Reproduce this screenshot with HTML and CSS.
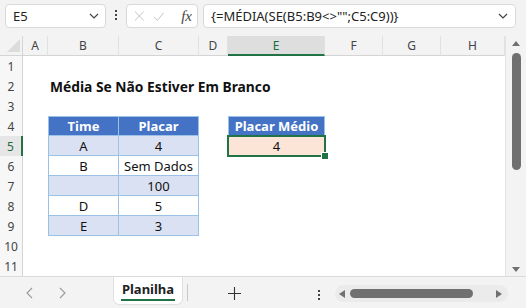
FILE: index.html
```html
<!DOCTYPE html>
<html lang="pt-br">
<head>
  <meta charset="UTF-8">
  <title>Média Se Não Estiver Em Branco</title>
  <link rel="stylesheet" href="styles.css">
</head>
<body>
  <div class="app">
    <!-- Barra de fórmulas -->
    <div class="toolbar">
      <div class="name-box">
        <span>E5</span>
        <svg class="chev" width="10" height="6" viewBox="0 0 10 6"><path d="M1 1 L5 5 L9 1" fill="none" stroke="#444" stroke-width="1.2"/></svg>
      </div>
      <div class="vdots"><i></i><i></i><i></i></div>
      <div class="fx-box">
        <svg width="12" height="12" viewBox="0 0 12 12"><path d="M1 1 L11 11 M11 1 L1 11" stroke="#bdbdbd" stroke-width="1"/></svg>
        <svg width="13" height="11" viewBox="0 0 13 11"><path d="M1 6 L5 10 L12 1" fill="none" stroke="#bdbdbd" stroke-width="1"/></svg>
        <span class="fx">fx</span>
      </div>
      <div class="formula-box">
        <span>{=MÉDIA(SE(B5:B9&lt;&gt;"";C5:C9))}</span>
        <svg class="chev" width="10" height="6" viewBox="0 0 10 6"><path d="M1 1 L5 5 L9 1" fill="none" stroke="#444" stroke-width="1.2"/></svg>
      </div>
    </div>

    <div class="main">
      <div class="grid">
        <!-- cabeçalhos de coluna -->
        <div class="corner"><span class="tri"></span></div>
        <div class="ch">A</div><div class="ch">B</div><div class="ch">C</div><div class="ch">D</div>
        <div class="ch sel">E</div><div class="ch">F</div><div class="ch">G</div><div class="ch">H</div>

        <div class="rh">1</div><div></div><div></div><div></div><div></div><div></div><div></div><div></div><div></div>

        <div class="rh">2</div><div></div><div class="title">Média Se Não Estiver Em Branco</div><div></div><div></div><div></div><div></div><div></div><div></div>

        <div class="rh">3</div><div></div><div></div><div></div><div></div><div></div><div></div><div></div><div></div>

        <div class="rh">4</div><div></div>
        <div class="cell th first top">Time</div><div class="cell th top">Placar</div>
        <div></div><div class="cell th first top">Placar Médio</div><div></div><div></div><div></div>

        <div class="rh sel">5</div><div></div>
        <div class="cell band first">A</div><div class="cell band">4</div>
        <div></div><div class="cell result">4</div><div></div><div></div><div></div>

        <div class="rh">6</div><div></div>
        <div class="cell first">B</div><div class="cell">Sem Dados</div>
        <div></div><div></div><div></div><div></div><div></div>

        <div class="rh">7</div><div></div>
        <div class="cell band first"></div><div class="cell band">100</div>
        <div></div><div></div><div></div><div></div><div></div>

        <div class="rh">8</div><div></div>
        <div class="cell first">D</div><div class="cell">5</div>
        <div></div><div></div><div></div><div></div><div></div>

        <div class="rh">9</div><div></div>
        <div class="cell band first">E</div><div class="cell band">3</div>
        <div></div><div></div><div></div><div></div><div></div>

        <div class="rh">10</div><div></div><div></div><div></div><div></div><div></div><div></div><div></div><div></div>

        <div class="rh">11</div><div></div><div></div><div></div><div></div><div></div><div></div><div></div><div></div>
      </div>

      <div class="vscroll">
        <span class="arr-up"></span>
        <span class="vthumb"></span>
        <span class="arr-down"></span>
      </div>
    </div>

    <!-- Abas -->
    <div class="tabbar">
      <div class="nav">
        <svg width="8" height="12" viewBox="0 0 8 12"><path d="M6 1 L1 6 L6 11" fill="none" stroke="#9a9a9a" stroke-width="1.1"/></svg>
        <svg width="8" height="12" viewBox="0 0 8 12"><path d="M2 1 L7 6 L2 11" fill="none" stroke="#9a9a9a" stroke-width="1.1"/></svg>
      </div>
      <div class="tab"><span>Planilha</span></div>
      <div class="sep"></div>
      <svg class="plus" width="13" height="13" viewBox="0 0 13 13"><path d="M6.5 0 V13 M0 6.5 H13" stroke="#333" stroke-width="1.1"/></svg>
      <div class="vdots small"><i></i><i></i><i></i></div>
      <div class="hscroll">
        <span class="arr-left"></span>
        <span class="hthumb"></span>
        <span class="arr-right"></span>
      </div>
    </div>
  </div>
</body>
</html>
```

FILE: styles.css
```css
* {
  box-sizing: border-box;
}

body {
  margin: 0;
  background: #f3f3f3;
  font-family: "Noto Sans", "Open Sans", sans-serif;
}

.app {
  width: 526px;
  height: 308px;
  display: flex;
  flex-direction: column;
  overflow: hidden;
}

/* barra de fórmulas */
.toolbar {
  height: 36px;
  display: flex;
  align-items: flex-start;
  padding: 4px 0 0 5px;
}

.name-box,
.fx-box,
.formula-box {
  height: 24px;
  background: #fff;
  border: 1px solid #d9d9d9;
  border-radius: 4px;
  display: flex;
  align-items: center;
  font-size: 13px;
  color: #222;
}

.name-box {
  width: 101px;
  padding: 0 6px 0 7px;
  justify-content: space-between;
}

.vdots {
  display: flex;
  flex-direction: column;
  gap: 2px;
  margin: 6px 9px 0 9px;
}

.vdots i {
  width: 2px;
  height: 2px;
  background: #444;
}

.fx-box {
  width: 72px;
  padding: 0 5px 0 7px;
  gap: 8px;
}

.fx {
  font-family: "Liberation Serif", serif;
  font-style: italic;
  font-size: 15px;
  color: #444;
  margin-left: 9px;
}

.formula-box {
  width: 313px;
  margin-left: 5px;
  padding: 0 7px;
  justify-content: space-between;
}

/* planilha */
.main {
  display: flex;
  height: 240px;
}

.grid {
  width: 505px;
  background: #fff;
  display: grid;
  grid-template-columns: 23px 25px 71px 80px 29px 97px 58px 58px 64px;
  grid-template-rows: repeat(12, 20px);
  font-size: 13px;
  color: #111;
}

.corner {
  background: #f3f3f3;
  border-right: 1px solid #d4d4d4;
  border-bottom: 1px solid #d4d4d4;
  position: relative;
}

.tri {
  position: absolute;
  right: 2px;
  bottom: 3px;
  width: 0;
  height: 0;
  border-left: 13px solid transparent;
  border-bottom: 13px solid #dcdcdc;
}

.ch {
  background: #f3f3f3;
  border-right: 1px solid #e1e1e1;
  border-bottom: 1px solid #d4d4d4;
  display: flex;
  align-items: center;
  justify-content: center;
  font-size: 12px;
  color: #444;
}

.ch.sel {
  background: #dedede;
  color: #1d6b40;
  border-bottom: 2px solid #217346;
}

.rh {
  background: #f7f7f7;
  border-right: 1px solid #d4d4d4;
  display: flex;
  align-items: center;
  justify-content: center;
  font-size: 12px;
  color: #444;
}

.rh.sel {
  background: #e6e6e6;
  color: #1d6b40;
  border-right: 2px solid #217346;
}

.title {
  white-space: nowrap;
  font-weight: bold;
  font-size: 13.8px;
  padding-left: 2px;
  display: flex;
  align-items: center;
}

.cell {
  display: flex;
  align-items: center;
  justify-content: center;
  border-right: 1px solid #9bc2e6;
  border-bottom: 1px solid #9bc2e6;
  white-space: nowrap;
}

.cell.first {
  border-left: 1px solid #9bc2e6;
}

.cell.top {
  border-top: 1px solid #9bc2e6;
}

.th {
  background: #4472c4;
  color: #fff;
  font-weight: bold;
}

.band {
  background: #d9e1f2;
}

.result {
  background: #fce4d6;
  border: none;
  outline: 2px solid #217346;
  outline-offset: -1px;
  position: relative;
}

.result::after {
  content: "";
  position: absolute;
  right: -4px;
  bottom: -4px;
  width: 6px;
  height: 6px;
  background: #217346;
  border: 1px solid #fff;
}

/* barra de rolagem vertical */
.vscroll {
  width: 21px;
  border-left: 1px solid #e3e3e3;
  background: #f3f3f3;
  display: flex;
  flex-direction: column;
  align-items: center;
  padding-top: 5px;
}

.arr-up {
  width: 0;
  height: 0;
  border-left: 4px solid transparent;
  border-right: 4px solid transparent;
  border-bottom: 5px solid #707070;
}

.vthumb {
  width: 9px;
  height: 117px;
  margin-top: 7px;
  border-radius: 5px;
  background: #707070;
}

.arr-down {
  margin-top: auto;
  margin-bottom: 4px;
  width: 0;
  height: 0;
  border-left: 4px solid transparent;
  border-right: 4px solid transparent;
  border-top: 5px solid #707070;
}

/* abas */
.tabbar {
  flex: 1;
  border-top: 1px solid #dadada;
  display: flex;
  align-items: flex-start;
}

.nav {
  width: 113px;
  display: flex;
  gap: 24px;
  padding: 10px 0 0 26px;
}

.tab {
  width: 70px;
  height: 28px;
  margin-top: 0;
  background: #fff;
  border: 1px solid #e1e1e1;
  border-top: none;
  border-radius: 0 0 6px 6px;
  display: flex;
  justify-content: center;
  padding-top: 4px;
}

.tab span {
  font-size: 13px;
  font-weight: bold;
  color: #222;
  height: 20px;
  border-bottom: 2px solid #217346;
  padding: 0 1px;
  line-height: 17px;
}

.sep {
  width: 1px;
  height: 17px;
  margin: 7px 0 0 4px;
  background: #c9c9c9;
}

.plus {
  margin: 10px 0 0 40px;
}

.vdots.small {
  margin: 13px 0 0 77px;
}

.hscroll {
  width: 173px;
  height: 17px;
  margin: 8px 0 0 15px;
  border-radius: 9px;
  background: #ebebeb;
  display: flex;
  align-items: center;
  padding: 0 6px 0 4px;
}

.arr-left {
  width: 0;
  height: 0;
  border-top: 4px solid transparent;
  border-bottom: 4px solid transparent;
  border-right: 6px solid #707070;
}

.hthumb {
  width: 123px;
  height: 9px;
  margin-left: 5px;
  border-radius: 5px;
  background: #707070;
}

.arr-right {
  margin-left: auto;
  width: 0;
  height: 0;
  border-top: 4px solid transparent;
  border-bottom: 4px solid transparent;
  border-left: 6px solid #707070;
}
```
